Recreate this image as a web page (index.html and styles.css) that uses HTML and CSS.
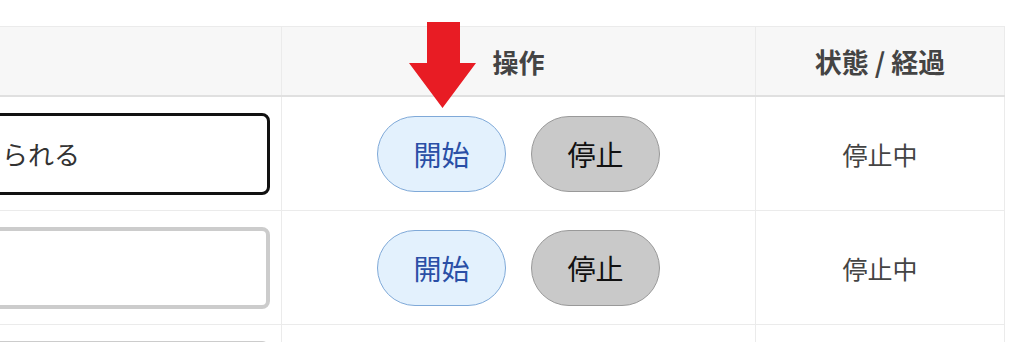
FILE: index.html
```html
<!DOCTYPE html>
<html lang="ja">
<head>
<meta charset="utf-8">
<link rel="stylesheet" href="styles.css">
</head>
<body>
<div class="page">
  <table class="grid">
    <colgroup>
      <col class="c-name">
      <col class="c-ops">
      <col class="c-state">
    </colgroup>
    <thead>
      <tr>
        <th class="h-name"></th>
        <th class="h-ops">操作</th>
        <th class="h-state">状態 / 経過</th>
      </tr>
    </thead>
    <tbody>
      <tr>
        <td class="cell-name"><div class="field field-active">られる</div></td>
        <td class="cell-ops">
          <div class="ops">
            <button class="btn btn-start">開始</button>
            <button class="btn btn-stop">停止</button>
          </div>
        </td>
        <td class="cell-state">停止中</td>
      </tr>
      <tr>
        <td class="cell-name"><div class="field field-idle"></div></td>
        <td class="cell-ops">
          <div class="ops">
            <button class="btn btn-start">開始</button>
            <button class="btn btn-stop">停止</button>
          </div>
        </td>
        <td class="cell-state">停止中</td>
      </tr>
      <tr>
        <td class="cell-name"><div class="field field-idle"></div></td>
        <td class="cell-ops"></td>
        <td class="cell-state"></td>
      </tr>
    </tbody>
  </table>
  <svg class="arrow" width="70" height="90" viewBox="0 0 70 90" aria-hidden="true">
    <polygon points="19,0 52,0 52,41 68,41 34.5,86 1,41 19,41" fill="#e81c24"/>
  </svg>
</div>
</body>
</html>
```

FILE: styles.css
```css
html, body {
  margin: 0;
  padding: 0;
  background: #ffffff;
  overflow: hidden;
}

body {
  width: 1024px;
  height: 342px;
  font-family: "Noto Sans CJK JP", "Noto Sans", sans-serif;
  color: #333333;
}

.page {
  position: relative;
  padding-top: 26px;
}

.grid {
  margin-left: -144px;
  border-collapse: collapse;
  table-layout: fixed;
  width: 1148px;
}

.c-name { width: 425px; }
.c-ops { width: 474px; }
.c-state { width: 249px; }

.grid th,
.grid td {
  border: 1px solid #ebebeb;
  padding: 0;
}

.grid thead th {
  background: #f7f7f7;
  height: 68px;
  font-size: 26px;
  font-weight: 700;
  color: #444444;
  text-align: center;
  border-bottom: 2px solid #e0e0e0;
}

.grid thead th.h-state {
  font-size: 27px;
}

.grid tbody td {
  height: 113px;
}

.cell-name {
  padding: 0 11px !important;
}

.field {
  box-sizing: border-box;
  height: 82px;
  border-radius: 8px;
  background: #ffffff;
  display: flex;
  align-items: center;
  padding-left: 131px;
  font-size: 26px;
  color: #333333;
  white-space: nowrap;
  overflow: hidden;
}

.field-active {
  border: 3px solid #111111;
}

.field-idle {
  border: 4px solid #cccccc;
}

.ops {
  display: flex;
  justify-content: center;
  align-items: center;
  gap: 25px;
}

.btn {
  box-sizing: border-box;
  width: 129px;
  height: 76px;
  border-radius: 38px;
  font-family: "Noto Sans CJK JP", "Noto Sans", sans-serif;
  font-size: 28px;
  padding: 0;
  line-height: 1;
}

.btn-start {
  background: #e3f1fd;
  border: 1.5px solid #7fa9d8;
  color: #2a4fa6;
}

.btn-stop {
  background: #c9c9c9;
  border: 1.5px solid #999999;
  color: #111111;
}

.cell-state {
  text-align: center;
  font-size: 25px;
  color: #444444;
}

.arrow {
  position: absolute;
  left: 408px;
  top: 22px;
}
```
